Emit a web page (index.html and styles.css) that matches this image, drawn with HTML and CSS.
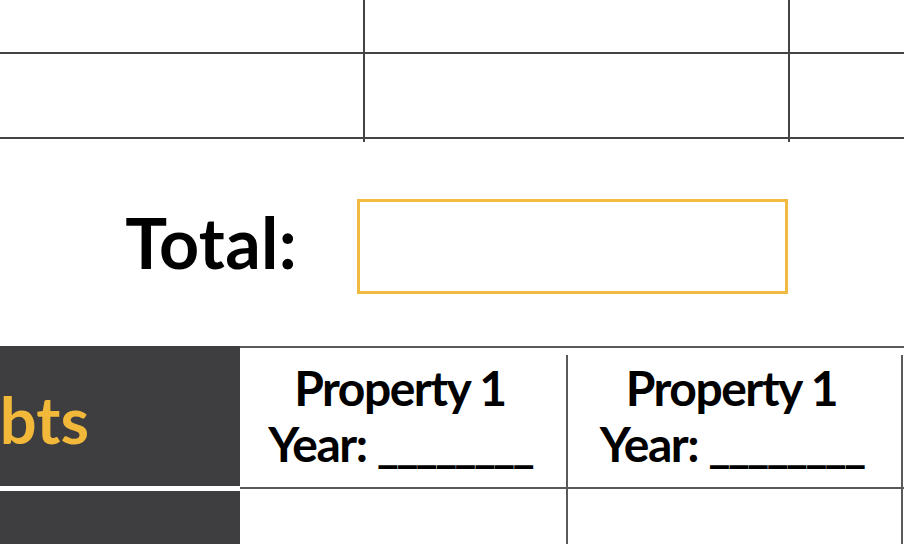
FILE: index.html
```html
<!DOCTYPE html>
<html lang="en">
<head>
<meta charset="utf-8">
<title>Debts worksheet</title>
<link rel="stylesheet" href="styles.css">
</head>
<body>
<div class="page">
  <div class="top-grid">
    <div class="tcell r1"></div><div class="tcell r1"></div><div class="tcell r1 last"></div>
    <div class="tcell r2"></div><div class="tcell r2"></div><div class="tcell r2 last"></div>
    <div class="tcell stub"></div><div class="tcell stub"></div><div class="tcell stub last"></div>
  </div>

  <div class="total-row">
    <div class="total-label">Total:</div>
    <div class="total-box"></div>
  </div>

  <div class="debts-grid">
    <div class="dark head"><span class="dark-title">Debts</span></div>
    <div class="hcell"><div class="hinner"><div class="prop">Property 1</div><div class="year">Year: <span class="blank">________</span></div></div></div>
    <div class="hcell"><div class="hinner"><div class="prop">Property 1</div><div class="year">Year: <span class="blank">________</span></div></div></div>
    <div class="hcell"><div class="hinner"></div></div>
    <div class="dark body"></div>
    <div class="bcell"></div>
    <div class="bcell"></div>
    <div class="bcell"></div>
  </div>
</div>
</body>
</html>
```

FILE: styles.css
```css
html, body {
  margin: 0;
  padding: 0;
  background: #ffffff;
}
body {
  width: 904px;
  height: 544px;
  overflow: hidden;
  font-family: Lato, "Liberation Sans", sans-serif;
  font-weight: 700;
  color: #000;
}
.page {
  width: 904px;
}

/* top table */
.top-grid {
  display: grid;
  grid-template-columns: 365px 425px 1fr;
}
.tcell {
  border-right: 2px solid #444;
}
.tcell.last { border-right: none; }
.tcell.r1 { height: 52px; border-bottom: 2px solid #444; }
.tcell.r2 { height: 83px; border-bottom: 2px solid #444; }
.tcell.stub { height: 3px; }

/* total */
.total-row {
  display: flex;
  align-items: flex-start;
  padding-top: 57px;
}
.total-label {
  width: 297px;
  text-align: right;
  font-size: 70px;
  line-height: 80px;
  padding-top: 3px;
  letter-spacing: 0.3px;
}
.total-box {
  margin-left: 60px;
  width: 425px;
  height: 89px;
  border: 3px solid #f0bb40;
}

/* debts table */
.debts-grid {
  margin-top: 52px;
  display: grid;
  grid-template-columns: 240px 328px 335px 1fr;
}
.dark {
  background: #3e3e40;
  display: flex;
  justify-content: flex-end;
  align-items: center;
  overflow: hidden;
}
.dark.head {
  border-bottom: 3px solid #fff;
  padding-right: 151px;
}
.dark.body {
  border-top: 2px solid #fff;
  height: 60px;
}
.dark-title {
  color: #f2b83a;
  font-size: 65px;
  line-height: 1;
  white-space: nowrap;
  padding-top: 6px;
}
.hcell {
  border-top: 2px solid #5a5a5a;
  border-bottom: 2px solid #5a5a5a;
  padding-top: 7px;
  display: flex;
}
.hinner {
  flex: 1;
  border-right: 2px solid #5a5a5a;
  height: 122px;
  padding-bottom: 10px;
  display: flex;
  flex-direction: column;
  align-items: center;
  justify-content: center;
  text-align: center;
  font-size: 48px;
  line-height: 56px;
  letter-spacing: -1.5px;
  padding-right: 6px;
}
.blank { letter-spacing: -3px; }
.bcell {
  border-right: 2px solid #5a5a5a;
}
```
